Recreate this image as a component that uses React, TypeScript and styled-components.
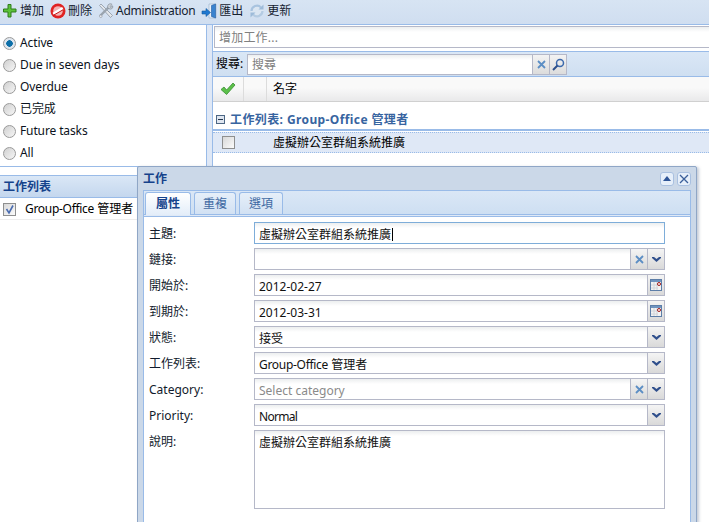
import { Fragment } from 'react';
import type { ReactNode } from 'react';
import styled, { createGlobalStyle } from 'styled-components';

const FONT = `"Noto Sans", "Noto Sans CJK TC", sans-serif`;
const BORDER = '#99bbe8';
const FIELD = '#b5b8c8';

const GlobalStyle = createGlobalStyle`
  html, body { margin: 0; padding: 0; background: #fff; }
  body { font: 12px/16px ${FONT}; color: #000; }
  * { box-sizing: border-box; }
`;

const Page = styled.div`
  position: relative;
  width: 709px;
  height: 522px;
  overflow: hidden;
  background: #fff;
`;

const Toolbar = styled.div`
  display: flex;
  align-items: center;
  gap: 6px;
  height: 25px;
  padding: 0 0 3px 2px;
  background: linear-gradient(#d7e4f3, #d0def0);
  border-bottom: 1px solid ${BORDER};
`;

const ToolButton = styled.div`
  display: flex;
  align-items: center;
  gap: 2px;
  color: #15212f;
`;

/* Tahoma runs a little narrower than Noto Sans for some words */
const Tight = styled.span<{ $by?: number }>`
  letter-spacing: ${(p) => p.$by ?? -0.3}px;
`;

const Main = styled.div`
  display: flex;
  height: 497px;
`;

const LeftColumn = styled.div`
  display: flex;
  flex-direction: column;
  flex: 0 0 207px;
  border-right: 1px solid ${BORDER};
`;

const Filters = styled.div`
  display: flex;
  flex-direction: column;
  height: 141px;
  padding-top: 7px;
`;

const FilterRow = styled.label`
  display: flex;
  align-items: center;
  gap: 4px;
  height: 22px;
  padding-left: 3px;
  color: #0b1220;
`;

const Radio = styled.span<{ $on?: boolean }>`
  width: 13px;
  height: 13px;
  border-radius: 50%;
  border: 1px solid #9a9a9a;
  background: ${(p) =>
    p.$on
      ? 'radial-gradient(circle, #0d6fa8 0 3px, #dfe6ee 3.5px)'
      : 'linear-gradient(135deg, #d0d0d0, #f6f6f6)'};
`;

const ListPanel = styled.div`
  flex: 1;
  border-top: 1px solid ${BORDER};
  padding-top: 8px;
`;

const ListHeader = styled.div`
  display: flex;
  align-items: center;
  height: 23px;
  padding-left: 3px;
  font-weight: bold;
  color: #15428b;
  border-top: 1px solid ${BORDER};
  border-bottom: 1px solid ${BORDER};
  background: linear-gradient(#dae7f6, #c4d7ee);
`;

const ListRow = styled.div`
  display: flex;
  align-items: center;
  gap: 9px;
  height: 21px;
  margin-top: 1px;
  padding-left: 3px;
  white-space: pre;
  border-bottom: 1px solid #ededed;
`;

const CheckBox = styled.span`
  display: flex;
  align-items: center;
  justify-content: center;
  flex: none;
  width: 13px;
  height: 13px;
  border: 1px solid #8e8f8f;
  background: linear-gradient(135deg, #d8d8d8, #fbfbfb);
`;

const Gutter = styled.div`
  flex: 0 0 5px;
  background: #dfe8f6;
`;

const RightColumn = styled.div`
  flex: 1;
  min-width: 0;
  border-left: 1px solid ${BORDER};
`;

const AddBar = styled.div`
  height: 26px;
  padding: 1px 0 0 1px;
`;

const AddInput = styled.div`
  height: 22px;
  margin-right: -4px;
  padding: 3px 0 0 4px;
  letter-spacing: 0.2px;
  color: #808080;
  border: 1px solid ${FIELD};
  background: linear-gradient(#eceeef, #fff 5px);
`;

const SearchBar = styled.div`
  display: flex;
  align-items: center;
  height: 26px;
  padding-left: 3px;
  border-top: 1px solid ${BORDER};
  border-bottom: 1px solid ${BORDER};
  background: linear-gradient(#dae7f6, #cfdff1);
`;

const SearchLabel = styled.div`
  flex: 0 0 31px;
`;

const SearchInput = styled.div`
  width: 286px;
  height: 21px;
  padding: 2px 0 0 4px;
  color: #808080;
  border: 1px solid ${FIELD};
  background: linear-gradient(#eceeef, #fff 5px);
`;

const SearchButton = styled.div`
  display: flex;
  align-items: center;
  justify-content: center;
  width: 17px;
  height: 21px;
  border: 1px solid ${FIELD};
  border-left: 0;
  background: linear-gradient(#f3f3f3, #dcdcdc);
`;

const GridHeader = styled.div`
  display: flex;
  height: 25px;
  border-bottom: 1px solid #d0d0d0;
  background: linear-gradient(#f9f9f9 45%, #e9e9ea);
`;

const HeaderCell = styled.div<{ $w?: number }>`
  display: flex;
  align-items: center;
  flex: ${(p) => (p.$w ? `0 0 ${p.$w}px` : '1')};
  padding-left: ${(p) => (p.$w ? 7 : 6)}px;
  border-right: ${(p) => (p.$w ? '1px solid #dcdcdc' : '0')};
`;

const GroupRow = styled.div`
  display: flex;
  align-items: center;
  gap: 5px;
  height: 29px;
  padding: 8px 0 0 3px;
  font-weight: bold;
  letter-spacing: 0.4px;
  color: #3764a0;
  border-bottom: 2px solid ${BORDER};
`;

const TaskRow = styled.div`
  display: flex;
  align-items: center;
  height: 21px;
  margin-top: 1px;
  background: #dfe8f6;
  border-top: 1px dotted ${BORDER};
  border-bottom: 1px dotted ${BORDER};
`;

const TaskCheck = styled.div`
  flex: 0 0 60px;
  padding-left: 9px;
`;

/* window floats over the page */
const Window = styled.div`
  position: absolute;
  left: 137px;
  top: 166px;
  width: 560px;
  height: 380px;
  padding: 0 5px;
  border: 1px solid #8fa6c6;
  border-radius: 2px 2px 0 0;
  background: #cbd8e8;
  box-shadow: 2px 1px 3px rgba(90, 110, 140, 0.35);
`;

const WindowTitle = styled.div`
  display: flex;
  align-items: center;
  justify-content: space-between;
  height: 23px;
  font-weight: bold;
  color: #15428b;
`;

const TitleTools = styled.div`
  display: flex;
  gap: 3px;
`;

const TitleTool = styled.div`
  display: flex;
  align-items: center;
  justify-content: center;
  width: 14px;
  height: 14px;
  border: 1px solid #a9c0e0;
  border-radius: 3px;
  background: #e6effa;
`;

const WindowBody = styled.div`
  height: 400px;
  border: 1px solid ${BORDER};
  background: #fff;
`;

const TabStrip = styled.div`
  display: flex;
  align-items: flex-end;
  gap: 3px;
  height: 24px;
  padding-left: 1px;
  background: linear-gradient(#dae7f6, #cedff2);
  border-bottom: 1px solid ${BORDER};
`;

const Tab = styled.div<{ $active?: boolean; $w: number }>`
  display: flex;
  align-items: center;
  justify-content: center;
  width: ${(p) => p.$w}px;
  height: ${(p) => (p.$active ? 23 : 22)}px;
  margin-bottom: ${(p) => (p.$active ? -1 : 0)}px;
  font-weight: ${(p) => (p.$active ? 'bold' : 'normal')};
  color: ${(p) => (p.$active ? '#15428b' : '#416aa3')};
  border: 1px solid ${BORDER};
  border-bottom: 0;
  border-radius: 3px 3px 0 0;
  background: ${(p) =>
    p.$active ? 'linear-gradient(#fff, #e3edf9)' : 'linear-gradient(#e6eff9, #d2e1f3)'};
`;

const TabUnderline = styled.div`
  height: 2px;
  background: #dfe9f6;
  border-bottom: 1px solid ${BORDER};
`;

const Form = styled.div`
  display: grid;
  grid-template-columns: 105px 411px;
  grid-auto-rows: 22px;
  row-gap: 4px;
  padding: 5px 0 0 5px;
`;

const FormLabel = styled.div`
  padding-top: 4px;
  color: #111a2c;
`;

const Field = styled.div<{ $focus?: boolean; $grow?: boolean }>`
  display: flex;
  height: ${(p) => (p.$grow ? '79px' : '22px')};
  border: 1px solid ${(p) => (p.$focus ? '#7eadd9' : FIELD)};
  background: linear-gradient(#eceeef, #fff 5px);
`;

const FieldText = styled.div<{ $muted?: boolean }>`
  flex: 1;
  padding: 4px 0 0 4px;
  white-space: nowrap;
  color: ${(p) => (p.$muted ? '#8a8a8a' : '#111')};
`;

const Caret = styled.span`
  display: inline-block;
  width: 1px;
  height: 13px;
  margin-left: 1px;
  vertical-align: -2px;
  background: #000;
`;

const Trigger = styled.div`
  display: flex;
  align-items: center;
  justify-content: center;
  flex: 0 0 17px;
  border-left: 1px solid ${FIELD};
  background: linear-gradient(#f4f4f4, #d9d9d9);
`;

const PlusIcon = () => (
  <svg width="16" height="16" viewBox="0 0 16 16">
    <path d="M6 1.5h3v4.5h5v3H9v5H6V9H1.5V6H6z" fill="#5cc23a" stroke="#2f7d1b" strokeWidth="1" />
  </svg>
);

const DeleteIcon = () => (
  <svg width="16" height="16" viewBox="0 0 16 16">
    <circle cx="8" cy="8" r="7.5" fill="#e02323" />
    <circle cx="8" cy="8" r="4.8" fill="#f3b4b4" />
    <path d="M3.2 10.8 12.8 5.2" stroke="#fff" strokeWidth="2.6" />
    <path d="M3 12.5 13 6.8" stroke="#c41717" strokeWidth="1" />
  </svg>
);

const ToolsIcon = () => (
  <svg width="16" height="16" viewBox="0 0 16 16" fill="none">
    <path d="M1.5 2.5 3 1l11.5 11.5-2 2z" fill="#e3e7eb" stroke="#8d97a3" strokeWidth=".8" />
    <path d="M2 13 11 4" stroke="#9aa4af" strokeWidth="2.4" />
    <path d="M10.5 1.5c1.2-1 3-.8 3.6 0L12 3.5l.6 1 2-1.6c.6 1.4-.2 3-2 3.2l-2.4-.6c-.8-1.6-.6-3 .3-4z" fill="#cfd5db" stroke="#7f8994" strokeWidth=".7" />
    <circle cx="2.8" cy="13.2" r="1.3" fill="#f2f2f2" stroke="#8d97a3" strokeWidth=".7" />
  </svg>
);

const ExportIcon = () => (
  <svg width="16" height="16" viewBox="0 0 16 16">
    <path d="M8 1h7v14H8z" fill="#e9f0f8" stroke="#9db4cf" strokeWidth=".7" />
    <path d="M10.5 2.5 14.5 1v14l-4-1.5z" fill="#3a83cf" stroke="#1f5ba3" strokeWidth=".6" />
    <path d="M1 8h4V5.5l4.5 4-4.5 4V11H1z" fill="#1f78d1" stroke="#145a9f" strokeWidth=".6" />
  </svg>
);

const RefreshIcon = () => (
  <svg width="16" height="16" viewBox="0 0 16 16" fill="none">
    <circle cx="8" cy="8" r="6.5" fill="#dbe6f2" />
    <path d="M2.5 8a5.5 5.5 0 0 1 9.5-3.6" stroke="#a8c3df" strokeWidth="2.2" />
    <path d="M13.5 8a5.5 5.5 0 0 1-9.5 3.6" stroke="#b4cbe2" strokeWidth="2.2" />
    <path d="M14.5 1.5v5h-5z" fill="#9ebbd9" />
    <path d="M1.5 14.5v-5h5z" fill="#9ebbd9" />
  </svg>
);

const CheckIcon = () => (
  <svg width="16" height="14" viewBox="0 0 16 14">
    <path d="M1 7.5 4 5l2.6 3L13 1l2 2-8.4 9.5z" fill="#5cc04a" stroke="#3a8f33" strokeWidth=".8" />
  </svg>
);

const CollapseIcon = () => (
  <svg width="9" height="9" viewBox="0 0 9 9">
    <rect x=".5" y=".5" width="8" height="8" fill="#dfe6f0" stroke="#4d6785" />
    <path d="M2 4.5h5" stroke="#24364d" />
  </svg>
);

const TickIcon = () => (
  <svg width="11" height="11" viewBox="0 0 11 11">
    <path d="M2.5 5 5 9 9 1.5" fill="none" stroke="#4a6cb0" strokeWidth="1.6" />
  </svg>
);

const ClearIcon = () => (
  <svg width="9" height="9" viewBox="0 0 9 9">
    <path d="M1 1l7 7M8 1 1 8" stroke="#5c8ec4" strokeWidth="1.8" />
  </svg>
);

const SearchIcon = () => (
  <svg width="13" height="13" viewBox="0 0 13 13" fill="none">
    <circle cx="8" cy="5" r="3.5" stroke="#3b69ad" strokeWidth="1.5" />
    <path d="M5.5 7.5 1 12" stroke="#2c4f8b" strokeWidth="2" />
  </svg>
);

const ChevronIcon = () => (
  <svg width="9" height="6" viewBox="0 0 9 6">
    <path d="M0 1h2l2.5 2L7 1h2v1L4.5 6 0 2z" fill="#2f4f8c" />
  </svg>
);

const CollapseUpIcon = () => (
  <svg width="8" height="5" viewBox="0 0 8 5">
    <path d="M4 0l4 5H0z" fill="#2f5597" />
  </svg>
);

const CloseIcon = () => (
  <svg width="10" height="10" viewBox="0 0 10 10">
    <path d="M1 1l8 8M9 1 1 9" stroke="#3a5f9a" strokeWidth="1.3" />
  </svg>
);

const CalendarIcon = () => (
  <svg width="12" height="12" viewBox="0 0 12 12">
    <rect x=".5" y=".5" width="11" height="11" fill="#f3f3f3" stroke="#5d7ea8" />
    <rect x="1" y="1" width="10" height="2" fill="#6f93bf" />
    <path d="M1 6h7M1 9h7M4 3v8M7 3v8" stroke="#d0d4da" />
    <circle cx="9" cy="5" r="1.5" fill="#fff" stroke="#a01818" />
  </svg>
);

const filters = ['Active', 'Due in seven days', 'Overdue', '已完成', 'Future tasks', 'All'];

type Row = {
  label: string;
  value: ReactNode;
  muted?: boolean;
  focus?: boolean;
  clear?: boolean;
  icon?: 'date' | 'combo';
};

const rows: Row[] = [
  { label: '主題:', value: '虛擬辦公室群組系統推廣', focus: true },
  { label: '鏈接:', value: '', clear: true, icon: 'combo' },
  { label: '開始於:', value: '2012-02-27', icon: 'date' },
  { label: '到期於:', value: '2012-03-31', icon: 'date' },
  { label: '狀態:', value: '接受', icon: 'combo' },
  { label: '工作列表:', value: <><Tight>Group-Office</Tight> 管理者</>, icon: 'combo' },
  { label: 'Category:', value: 'Select category', muted: true, clear: true, icon: 'combo' },
  { label: 'Priority:', value: <Tight $by={-0.7}>Normal</Tight>, icon: 'combo' },
];

export default function App() {
  return (
    <Page>
      <GlobalStyle />
      <Toolbar>
        <ToolButton><PlusIcon />增加</ToolButton>
        <ToolButton><DeleteIcon />刪除</ToolButton>
        <ToolButton><ToolsIcon /><Tight>Administration</Tight></ToolButton>
        <ToolButton><ExportIcon />匯出</ToolButton>
        <ToolButton><RefreshIcon />更新</ToolButton>
      </Toolbar>
      <Main>
        <LeftColumn>
          <Filters>
            {filters.map((f, i) => (
              <FilterRow key={f}>
                <Radio $on={i === 0} />
                <Tight $by={-0.12}>{f}</Tight>
              </FilterRow>
            ))}
          </Filters>
          <ListPanel>
            <ListHeader>工作列表</ListHeader>
            <ListRow>
              <CheckBox><TickIcon /></CheckBox>
              <span><Tight>Group-Office</Tight> 管理者</span>
            </ListRow>
          </ListPanel>
        </LeftColumn>
        <Gutter />
        <RightColumn>
          <AddBar>
            <AddInput>增加工作...</AddInput>
          </AddBar>
          <SearchBar>
            <SearchLabel>搜尋:</SearchLabel>
            <SearchInput>搜尋</SearchInput>
            <SearchButton><ClearIcon /></SearchButton>
            <SearchButton><SearchIcon /></SearchButton>
          </SearchBar>
          <GridHeader>
            <HeaderCell $w={31}><CheckIcon /></HeaderCell>
            <HeaderCell $w={23} />
            <HeaderCell>名字</HeaderCell>
          </GridHeader>
          <GroupRow>
            <CollapseIcon />
            工作列表: Group-Office 管理者
          </GroupRow>
          <TaskRow>
            <TaskCheck><CheckBox /></TaskCheck>
            虛擬辦公室群組系統推廣
          </TaskRow>
        </RightColumn>
      </Main>
      <Window>
        <WindowTitle>
          工作
          <TitleTools>
            <TitleTool><CollapseUpIcon /></TitleTool>
            <TitleTool><CloseIcon /></TitleTool>
          </TitleTools>
        </WindowTitle>
        <WindowBody>
          <TabStrip>
            <Tab $active $w={46}>屬性</Tab>
            <Tab $w={42}>重複</Tab>
            <Tab $w={44}>選項</Tab>
          </TabStrip>
          <TabUnderline />
          <Form>
            {rows.map((r) => (
              <Fragment key={r.label}>
                <FormLabel>{r.label}</FormLabel>
                <Field $focus={r.focus}>
                  <FieldText $muted={r.muted}>
                    {r.value}
                    {r.focus && <Caret />}
                  </FieldText>
                  {r.clear && <Trigger><ClearIcon /></Trigger>}
                  {r.icon === 'combo' && <Trigger><ChevronIcon /></Trigger>}
                  {r.icon === 'date' && <Trigger><CalendarIcon /></Trigger>}
                </Field>
              </Fragment>
            ))}
            <FormLabel>說明:</FormLabel>
            <Field $grow>
              <FieldText>虛擬辦公室群組系統推廣</FieldText>
            </Field>
          </Form>
        </WindowBody>
      </Window>
    </Page>
  );
}
